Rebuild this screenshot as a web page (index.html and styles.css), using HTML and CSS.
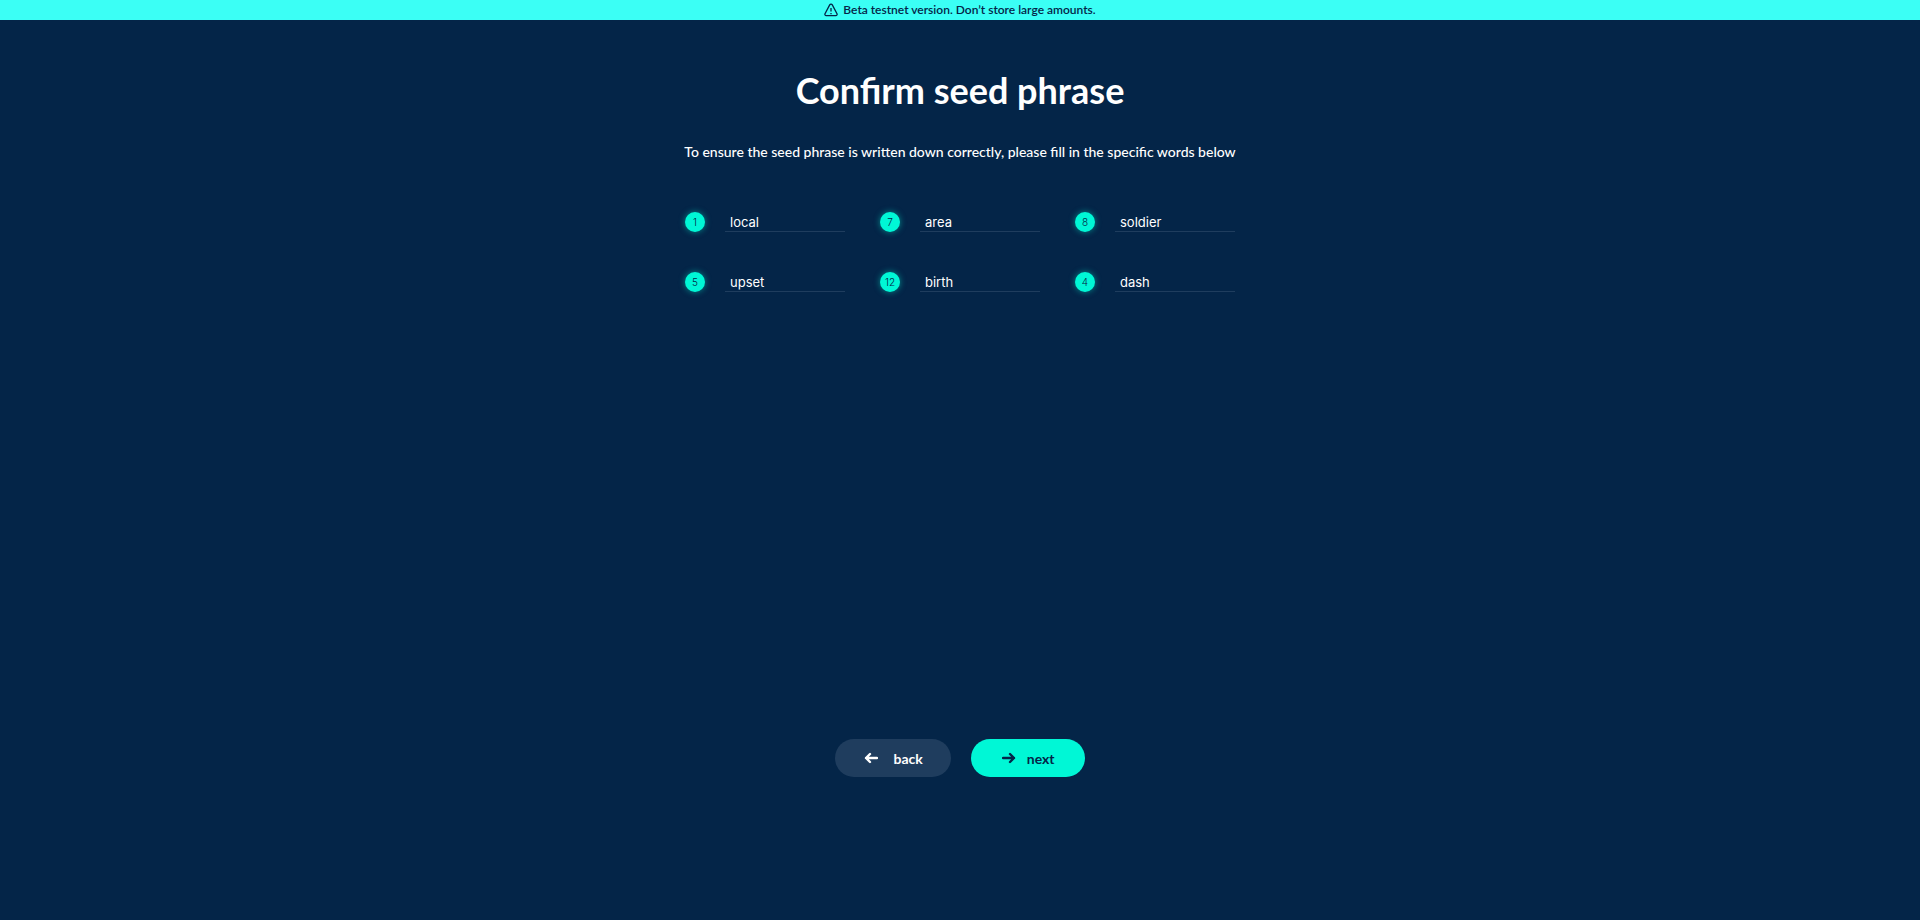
FILE: index.html
```
<!DOCTYPE html>
<html lang="en">
<head>
<meta charset="utf-8">
<meta name="viewport" content="width=device-width, initial-scale=1">
<title>Confirm seed phrase</title>
<link rel="stylesheet" href="styles.css">
</head>
<body>
<div class="banner" role="status">
  <svg class="banner-icon" viewBox="0 0 14 14" aria-hidden="true"><path d="M5.7 1.9 1 10.700a1.400 1.400 0 0 0 1.200 2h9.600a1.400 1.400 0 0 0 1.200-2L8.300 1.900a1.500 1.500 0 0 0-2.600 0zM7 5v3.600M7 10v1.200"/></svg>
  <span>Beta testnet version. Don’t store large amounts.</span>
</div>
<main class="page">
  <h1 class="title">Confirm seed phrase</h1>
  <p class="lead">To ensure the seed phrase is written down correctly, please fill in the specific words below</p>
  <form class="form" id="seed-form">
    <div class="words">
      <div class="word"><label class="badge" for="word-1">1</label><input class="field" id="word-1" type="text" value="local"></div>
      <div class="word"><label class="badge" for="word-7">7</label><input class="field" id="word-7" type="text" value="area"></div>
      <div class="word"><label class="badge" for="word-8">8</label><input class="field" id="word-8" type="text" value="soldier"></div>
      <div class="word"><label class="badge" for="word-5">5</label><input class="field" id="word-5" type="text" value="upset"></div>
      <div class="word"><label class="badge" for="word-12">12</label><input class="field" id="word-12" type="text" value="birth"></div>
      <div class="word"><label class="badge" for="word-4">4</label><input class="field" id="word-4" type="text" value="dash"></div>
    </div>
    <div class="actions">
      <button class="button button-back" type="button">
        <svg class="arrow" viewBox="0 0 14 12" aria-hidden="true"><path d="M13 6H2M6 2 2 6l4 4"/></svg>
        <span>back</span>
      </button>
      <button class="button button-next" type="submit">
        <svg class="arrow" viewBox="0 0 14 12" aria-hidden="true"><path d="M1 6h11M8 2l4 4-4 4"/></svg>
        <span>next</span>
      </button>
    </div>
  </form>
</main>
</body>
</html>
```
FILE: styles.css
```
* {
  box-sizing: border-box;
}

body {
  display: flex;
  flex-direction: column;
  min-height: 100vh;
  margin: 0;
  background: #042548;
  color: #fff;
  font-family: Lato, sans-serif;
}

.banner {
  display: flex;
  align-items: center;
  justify-content: center;
  gap: 5px;
  min-height: 20px;
  background: #3bfff5;
  color: #042548;
  font-size: 12px;
  font-weight: 600;
  line-height: 18px;
}

.banner-icon {
  width: 14px;
  height: 14px;
  fill: none;
  stroke: currentColor;
  stroke-width: 1.3;
}

.page {
  display: flex;
  flex: 1;
  flex-direction: column;
  align-items: center;
  padding: 47px 20px 143px;
}

.title {
  margin: 0 0 29px;
  font-size: 36px;
  font-weight: 700;
  line-height: 46px;
}

.lead {
  margin: 0 0 50px;
  font-size: 14px;
  font-weight: 500;
  line-height: 20px;
  text-align: center;
}

.form {
  display: flex;
  flex: 1;
  flex-direction: column;
  align-items: center;
}

.words {
  display: grid;
  grid-template-columns: repeat(3, auto);
  gap: 40px 35px;
}

.word {
  display: flex;
  align-items: center;
  gap: 20px;
}

.badge {
  width: 20px;
  height: 20px;
  border-radius: 50%;
  background: #00f7d6;
  box-shadow: 0 0 6px rgba(0, 247, 214, 0.5);
  color: #042548;
  font-family: Inter, sans-serif;
  font-size: 10px;
  font-weight: 300;
  line-height: 21px;
  text-align: center;
}

.field {
  width: 120px;
  height: 20px;
  padding: 0 5px;
  border: 0;
  border-bottom: 1px solid #1f3d5e;
  outline: 0;
  background: transparent;
  color: #fff;
  font-family: Inter, sans-serif;
  font-size: 13px;
}

.actions {
  display: flex;
  gap: 20px;
  margin-top: auto;
}

.button {
  display: flex;
  align-items: center;
  height: 38px;
  border: 0;
  border-radius: 19px;
  font-family: inherit;
  font-size: 14px;
  font-weight: 700;
  cursor: pointer;
}

.button-back {
  gap: 15px;
  padding: 0 28px 0 29px;
  background: #1f3d5e;
  color: #fff;
}

.button-next {
  gap: 11px;
  padding: 0 30px 0 31px;
  background: #00f7d6;
  color: #042548;
}

.arrow {
  width: 14px;
  height: 12px;
  fill: none;
  stroke: currentColor;
  stroke-width: 2.4;
  stroke-linecap: round;
  stroke-linejoin: round;
}
```
